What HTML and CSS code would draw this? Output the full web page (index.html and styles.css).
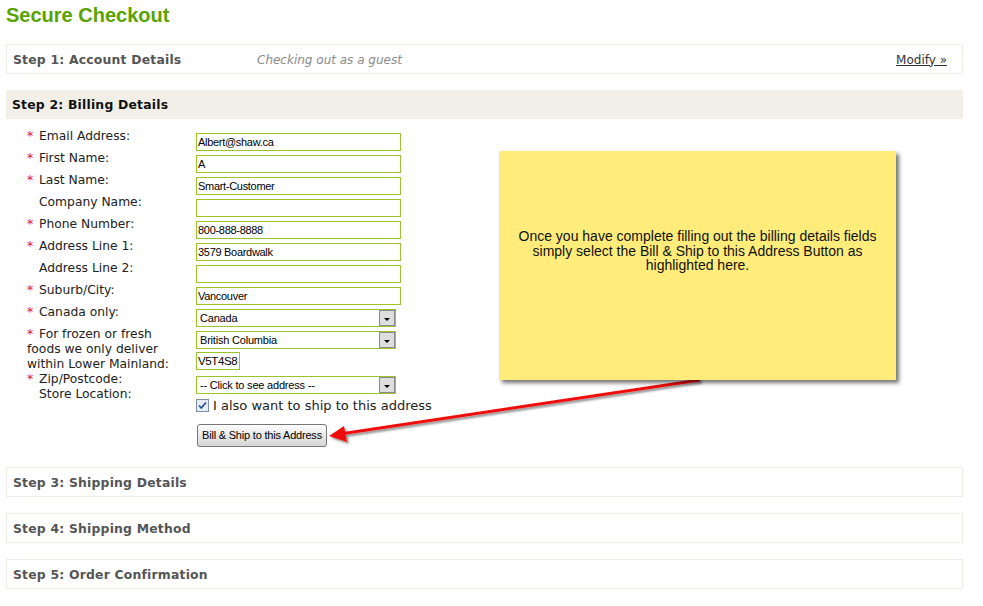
FILE: index.html
```html
<!DOCTYPE html>
<html>
<head lang="en">
    <meta charset="UTF-8">
    <title>Secure Checkout</title>
    <link rel="stylesheet" href="styles.css">
</head>
<body>

<div class="page">

    <h1 class="page-title">Secure Checkout</h1>

    <!-- step 1 -->
    <div class="step">
        <span class="step-name">Step 1: Account Details</span>
        <span class="step-note">Checking out as a guest</span>
        <a href="javascript:void(0);" class="step-modify">Modify &raquo;</a>
    </div>

    <!-- step 2 -->
    <div class="step step-active">
        <span class="step-name">Step 2: Billing Details</span>
    </div>

    <div class="billing">
        <div class="form-row">
            <label class="field-label"><span class="req">*</span>Email Address:</label>
            <div class="field"><input type="text" class="text-input" value="Albert@shaw.ca"></div>
        </div>
        <div class="form-row">
            <label class="field-label"><span class="req">*</span>First Name:</label>
            <div class="field"><input type="text" class="text-input" value="A"></div>
        </div>
        <div class="form-row">
            <label class="field-label"><span class="req">*</span>Last Name:</label>
            <div class="field"><input type="text" class="text-input" value="Smart-Customer"></div>
        </div>
        <div class="form-row">
            <label class="field-label label-plain">Company Name:</label>
            <div class="field"><input type="text" class="text-input" value=""></div>
        </div>
        <div class="form-row">
            <label class="field-label"><span class="req">*</span>Phone Number:</label>
            <div class="field"><input type="text" class="text-input" value="800-888-8888"></div>
        </div>
        <div class="form-row">
            <label class="field-label"><span class="req">*</span>Address Line 1:</label>
            <div class="field"><input type="text" class="text-input" value="3579 Boardwalk"></div>
        </div>
        <div class="form-row">
            <label class="field-label label-plain">Address Line 2:</label>
            <div class="field"><input type="text" class="text-input" value=""></div>
        </div>
        <div class="form-row">
            <label class="field-label"><span class="req">*</span>Suburb/City:</label>
            <div class="field"><input type="text" class="text-input" value="Vancouver"></div>
        </div>
        <div class="form-row">
            <label class="field-label"><span class="req">*</span>Canada only:</label>
            <div class="field">
                <div class="select-box"><span class="select-text">Canada</span><span class="select-btn"></span></div>
            </div>
        </div>
        <div class="form-row">
            <label class="field-label"><span class="req">*</span>For frozen or fresh<br>foods we only deliver<br>within Lower Mainland:</label>
            <div class="field">
                <div class="select-box"><span class="select-text">British Columbia</span><span class="select-btn"></span></div>
                <input type="text" class="text-input postcode" value="V5T4S8">
            </div>
        </div>
        <div class="form-row">
            <label class="field-label"><span class="req">*</span>Zip/Postcode:<br><span class="label-indent">Store Location:</span></label>
            <div class="field">
                <div class="select-box"><span class="select-text">-- Click to see address --</span><span class="select-btn"></span></div>
                <div class="ship-check">
                    <span class="check-box">
                        <svg width="11" height="11" viewBox="0 0 11 11"><path d="M2 5.5 L4.3 8 L9 2.5" fill="none" stroke="#2b4f9a" stroke-width="1.8"/></svg>
                    </span>
                    I also want to ship to this address
                </div>
            </div>
        </div>
        <div class="form-row button-row">
            <div class="field-label"></div>
            <div class="field"><a href="javascript:void(0);" class="bill-button">Bill &amp; Ship to this Address</a></div>
        </div>
    </div>

    <div class="step"><span class="step-name">Step 3: Shipping Details</span></div>
    <div class="step"><span class="step-name">Step 4: Shipping Method</span></div>
    <div class="step"><span class="step-name">Step 5: Order Confirmation</span></div>

    <!-- arrow pointing at the button -->
    <svg class="hint-arrow" width="400" height="80" viewBox="0 0 400 80">
        <defs>
            <filter id="arrowShadow" x="-10%" y="-30%" width="120%" height="160%">
                <feDropShadow dx="2" dy="2" stdDeviation="1.2" flood-color="#000" flood-opacity="0.45"/>
            </filter>
        </defs>
        <g filter="url(#arrowShadow)">
            <line x1="26" y1="62" x2="386" y2="8" stroke="#ee1010" stroke-width="3"/>
            <polygon points="15,64 30,54 33,70" fill="#ee1010"/>
        </g>
    </svg>

    <!-- yellow note -->
    <div class="hint-note">
        Once you have complete filling out the billing details fields<br>
        simply select the Bill &amp; Ship to this Address Button as<br>
        highlighted here.
    </div>

</div>

</body>
</html>
```

FILE: styles.css
```css
* {
    padding: 0px;
    margin: 0px;
    box-sizing: border-box;
}

body {
    background: #ffffff;
    font-family: "DejaVu Sans", Verdana, sans-serif;
    color: #222222;
}

a {
    color: #333333;
}

.page {
    position: relative;
    width: 957px;
    margin-left: 6px;
}

.page-title {
    font-family: "Liberation Sans", Arial, sans-serif;
    font-size: 20px;
    font-weight: bold;
    color: #58a300;
    line-height: 30px;
    height: 44px;
}

/* step bars */
.step {
    display: flex;
    align-items: center;
    height: 30px;
    padding: 1px 15px 0px 6px;
    border: 1px solid #eeece6;
    margin-bottom: 16px;
    font-size: 12px;
    color: #555555;
}

.step-name {
    font-weight: bold;
    font-size: 12.4px;
    width: 244px;
    letter-spacing: 0.2px;
}

.step-note {
    flex: 1;
    font-style: italic;
    color: #8a8a8a;
}

.step-modify {
    color: #333333;
    text-decoration: underline;
}

.step-active {
    height: 29px;
    padding-top: 0px;
    padding-left: 5px;
    background: #f2efe9;
    border-color: #f2efe9;
    color: #111111;
    margin-bottom: 0px;
}

/* billing form */
.billing {
    padding: 10px 0px 20px 21px;
}

.form-row {
    display: flex;
    align-items: flex-start;
}

.field-label {
    width: 169px;
    flex-shrink: 0;
    font-size: 12.3px;
    line-height: 15px;
    color: #222222;
}

.req {
    display: inline-block;
    width: 12px;
    color: #e0141e;
}

.label-plain,
.label-indent {
    padding-left: 12px;
}

.field {
    padding-top: 4px;
    display: flex;
    flex-direction: column;
    align-items: flex-start;
}

.text-input {
    display: block;
    width: 205px;
    height: 18px;
    border: 1px solid #9ac52a;
    padding: 0px 1px;
    font-family: "Liberation Sans", Arial, sans-serif;
    font-size: 11px;
    letter-spacing: -0.3px;
    color: #000000;
    outline: none;
}

.text-input.postcode {
    width: 44px;
    margin-top: 3px;
    font-size: 11.5px;
    letter-spacing: -0.4px;
}

.select-box {
    position: relative;
    width: 200px;
    height: 18px;
    border: 1px solid #9ac52a;
    font-family: "Liberation Sans", Arial, sans-serif;
    font-size: 11px;
    letter-spacing: -0.2px;
    line-height: 16px;
    color: #000000;
    background: #ffffff;
}

.select-text {
    padding-left: 3px;
}

.select-btn {
    position: absolute;
    right: 0px;
    top: 0px;
    width: 16px;
    height: 16px;
    border: 1px solid #8b8b8b;
    background: #dedede;
}

.select-btn:after {
    content: "";
    position: absolute;
    left: 4px;
    top: 7px;
    border-left: 3.5px solid transparent;
    border-right: 3.5px solid transparent;
    border-top: 3px solid #000000;
}

.ship-check {
    display: flex;
    align-items: center;
    margin-top: 4px;
    font-size: 13px;
    line-height: 15px;
    color: #222222;
}

.check-box {
    display: inline-block;
    width: 13px;
    height: 13px;
    margin-right: 4px;
    border: 1px solid #7d8ea6;
    background: #e6ecf4;
}

.check-box svg {
    display: block;
}

.button-row .field {
    padding-top: 11px;
}

.bill-button {
    display: block;
    width: 130px;
    height: 23px;
    line-height: 21px;
    margin-left: 1px;
    text-align: center;
    border: 1px solid #777777;
    border-radius: 3px;
    background: linear-gradient(#fdfdfd, #e4e4e4 60%, #d6d6d6);
    font-family: "Liberation Sans", Arial, sans-serif;
    font-size: 11px;
    letter-spacing: -0.2px;
    color: #000000;
    text-decoration: none;
}

/* overlay hint */
.hint-note {
    position: absolute;
    left: 493px;
    top: 151px;
    width: 397px;
    height: 229px;
    padding-top: 78px;
    background: #ffec7b;
    box-shadow: 3px 3px 4px rgba(0, 0, 0, 0.55);
    font-family: "Liberation Sans", Arial, sans-serif;
    font-size: 14px;
    line-height: 14.5px;
    text-align: center;
    color: #111111;
}

.hint-arrow {
    position: absolute;
    left: 308px;
    top: 372px;
}
```
